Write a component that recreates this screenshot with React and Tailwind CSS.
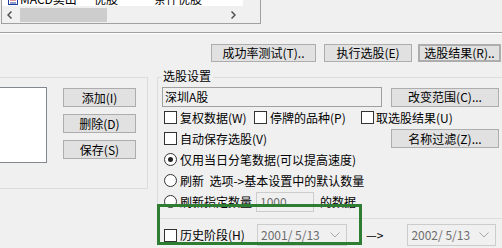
// 条件选股 dialog — lower half with settings group and history-period row
const Check = () => <span className="w-[13px] h-[13px] border border-[#333] bg-white shrink-0" />;

const Radio = ({ on }) => (
  <span className="w-[13px] h-[13px] rounded-full border border-[#333] bg-white shrink-0 flex items-center justify-center">
    {on && <span className="w-[5px] h-[5px] rounded-full bg-[#222]" />}
  </span>
);

const Btn = ({ className, children }) => (
  <div className={`flex items-center justify-center bg-[#e1e1e1] border border-[#adadad] whitespace-nowrap ${className}`}>
    {children}
  </div>
);

const Chevron = () => (
  <svg width="10" height="6" viewBox="0 0 10 6" className="shrink-0">
    <polyline points="0.5,0.5 5,5 9.5,0.5" fill="none" stroke="#a8a8a8" strokeWidth="1" />
  </svg>
);

const DateBox = ({ value, className }) => (
  <div className={`h-[22px] flex items-center justify-between border border-[#cccccc] bg-[#f0f0f0] pl-[3px] pr-[6px] text-[#6d6d6d] ${className}`}>
    <span>{value}</span>
    <Chevron />
  </div>
);

const ListIcon = () => (
  <svg width="10" height="12" viewBox="0 0 10 12" className="shrink-0">
    <rect x="0.5" y="0.5" width="9" height="11" fill="#fff" stroke="#1f3f9f" />
    <line x1="2" y1="4" x2="8" y2="4" stroke="#c0282d" />
    <line x1="2" y1="7" x2="8" y2="7" stroke="#c0282d" />
    <line x1="2" y1="10" x2="8" y2="10" stroke="#1f3f9f" />
  </svg>
);

export default function App() {
  return (
    <div className="relative w-[502px] h-[248px] overflow-hidden bg-[#f0f0f0] text-black text-[12px] leading-[14px] font-['Noto_Sans_CJK_SC','Noto_Sans',sans-serif]">

      {/* ── formula list (scrolled, only the bottom sliver shows) ── */}
      <div className="ml-[1px] w-[260px] h-[24px] border-x border-b border-[#a0a0a0] flex">
        <div className="w-[241px] flex flex-col">
          <div className="h-[6px] overflow-hidden bg-white">
            <div className="-mt-[9px] h-[16px] flex items-center leading-[16px] whitespace-nowrap">
              <div className="w-[92px] pl-[6px] flex items-center gap-[2px]">
                <ListIcon />
                <span>MACD卖出</span>
              </div>
              <div className="w-[60px]">优股</div>
              <div>条件优股</div>
            </div>
          </div>
          <div className="h-[17px] flex items-center">
            <svg width="5" height="8" viewBox="0 0 5 8" className="ml-[5px]">
              <polyline points="4.5,0.5 1,4 4.5,7.5" fill="none" stroke="#505050" strokeWidth="1.5" />
            </svg>
            <div className="ml-[8px] w-[87px] h-[14px] bg-[#cdcdcd]" />
            <svg width="5" height="8" viewBox="0 0 5 8" className="ml-auto mr-[7px]">
              <polyline points="0.5,0.5 4,4 0.5,7.5" fill="none" stroke="#505050" strokeWidth="1.5" />
            </svg>
          </div>
        </div>
        <div className="flex-1" />
      </div>

      {/* ── separator ── */}
      <div className="mt-[8px] h-px bg-[#a0a0a0]" />
      <div className="h-px bg-white" />

      {/* ── action buttons ── */}
      <div className="mt-[10px] ml-[211px] flex">
        <Btn className="w-[105px] h-[18px]">成功率测试(T)..</Btn>
        <Btn className="ml-[8px] w-[88px] h-[18px]">执行选股(E)</Btn>
        <Btn className="ml-[6px] w-[83px] h-[18px] border-2 border-[#0078d7]">选股结果(R)..</Btn>
      </div>

      {/* ── groups ── */}
      <div className="mt-[15px] flex items-start">
        {/* left group: saved conditions */}
        <div className="-ml-[10px] w-[158px] h-[112px] border border-[#dcdcdc] flex pt-[9px] shrink-0">
          <div className="ml-[4px] w-[52px] h-[76px] bg-white border border-[#828790]" />
          <div className="ml-[16px] mt-px w-[73px] flex flex-col gap-[7px]">
            <Btn className="h-[19px]">添加(I)</Btn>
            <Btn className="h-[19px]">删除(D)</Btn>
            <Btn className="h-[19px]">保存(S)</Btn>
          </div>
        </div>

        {/* right column */}
        <div className="ml-[9px] flex flex-col shrink-0">
          <div className="relative w-[360px] h-[142px] border border-[#dcdcdc] pt-[9px]">
            <span className="absolute left-[3px] -top-[9px] px-[2px] bg-[#f0f0f0]">选股设置</span>

            <div className="flex items-center">
              <div className="ml-[4px] w-[220px] h-[20px] border border-[#a0a0a0] bg-[#f0f0f0] flex items-center pl-[2px]">深圳A股</div>
              <Btn className="ml-[9px] w-[108px] h-[19px]">改变范围(C)...</Btn>
            </div>

            <div className="pl-[6px] flex flex-col">
              <div className="h-[21px] flex items-center whitespace-nowrap">
                <div className="w-[90px] flex items-center gap-[3px]"><Check />复权数据(W)</div>
                <div className="w-[107px] flex items-center gap-[3px]"><Check />停牌的品种(P)</div>
                <div className="flex items-center gap-[2px]"><Check />取选股结果(U)</div>
              </div>
              <div className="h-[21px] flex items-center whitespace-nowrap">
                <div className="w-[227px] flex items-center gap-[3px]"><Check />自动保存选股(V)</div>
                <Btn className="w-[108px] h-[19px]">名称过滤(Z)...</Btn>
              </div>
              <div className="h-[21px] flex items-center gap-[3px] whitespace-nowrap">
                <Radio on />仅用当日分笔数据(可以提高速度)
              </div>
              <div className="h-[21px] flex items-center gap-[3px] whitespace-nowrap">
                <Radio />刷新{'\u00a0\u00a0'}选项-&gt;基本设置中的默认数量
              </div>
              <div className="h-[21px] flex items-center whitespace-nowrap">
                <Radio />
                <span className="ml-[3px]">刷新指定数量</span>
                <div className="ml-[4px] w-[58px] h-[20px] border border-[#cccccc] bg-[#f0f0f0] text-[#6d6d6d] flex items-center pl-[3px]">1000</div>
                <span className="ml-[6px]">的数据</span>
              </div>
            </div>
          </div>

          {/* history period row */}
          <div className="mt-[5px] h-[22px] pl-[7px] flex items-center whitespace-nowrap">
            <div className="w-[93px] flex items-center gap-[3px]"><Check />历史阶段(H)</div>
            <DateBox value="2001/ 5/13" className="w-[90px]" />
            <span className="ml-[19px]">—&gt;</span>
            <DateBox value="2002/ 5/13" className="ml-[24px] w-[89px]" />
          </div>
        </div>
      </div>

      {/* green highlight annotation */}
      <div className="absolute left-[157px] top-[204px] w-[205px] h-[41px] border-[3px] border-[#2f7d32]" />
    </div>
  );
}
